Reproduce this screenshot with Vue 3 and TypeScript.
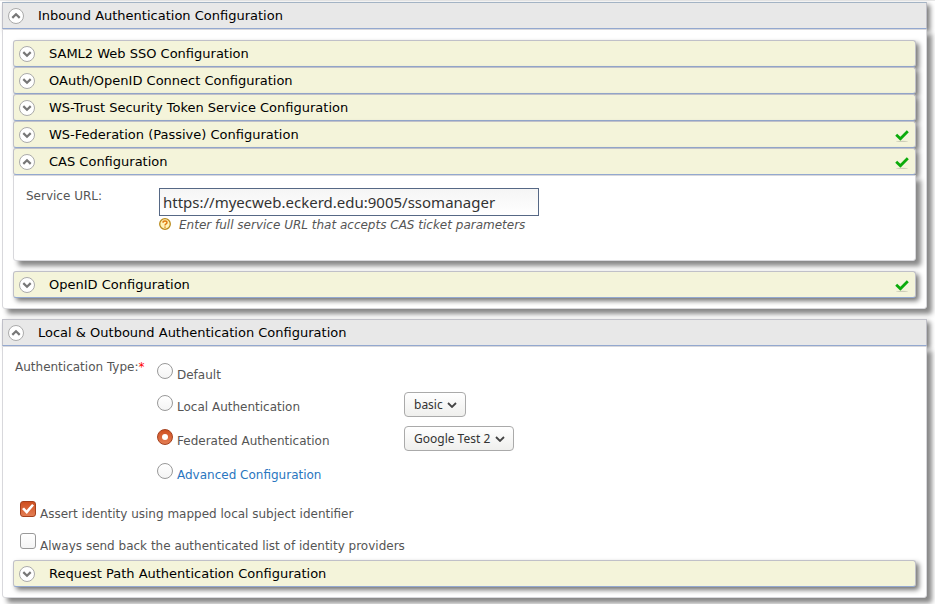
<script setup lang="ts">
import { ref } from 'vue'

interface Panel {
  title: string
  configured: boolean
}

const inboundPanels: Panel[] = [
  { title: 'SAML2 Web SSO Configuration', configured: false },
  { title: 'OAuth/OpenID Connect Configuration', configured: false },
  { title: 'WS-Trust Security Token Service Configuration', configured: false },
  { title: 'WS-Federation (Passive) Configuration', configured: true },
]

const inboundOpen = ref(true)
const outboundOpen = ref(true)
const casOpen = ref(true)
const serviceUrl = ref('https://myecweb.eckerd.edu:9005/ssomanager')
const authType = ref('federated')
const localAuthenticator = ref('basic')
const federatedIdp = ref('Google Test 2')
const assertIdentity = ref(true)
const sendIdpList = ref(false)
</script>

<template>
  <main class="page">
    <h2 class="bar outer">
      <button type="button" class="toggle" :aria-expanded="inboundOpen" @click="inboundOpen = !inboundOpen">
        <svg class="arrow" :class="{ down: !inboundOpen }" viewBox="0 0 16 16" aria-hidden="true">
          <circle cx="8" cy="8" r="7.5" />
          <path d="M4.3 9.9 8 6.3l3.7 3.6" />
        </svg>
        <span>Inbound Authentication Configuration</span>
      </button>
    </h2>
    <section v-if="inboundOpen" class="body outer-body">
      <h3 v-for="panel in inboundPanels" :key="panel.title" class="bar inner">
        <button type="button" class="toggle" aria-expanded="false">
          <svg class="arrow down" viewBox="0 0 16 16" aria-hidden="true">
            <circle cx="8" cy="8" r="7.5" />
            <path d="M4.3 9.9 8 6.3l3.7 3.6" />
          </svg>
          <span>{{ panel.title }}</span>
          <svg v-if="panel.configured" class="tick" viewBox="0 0 14 14" aria-hidden="true">
            <path d="M1.2 6.8 5.4 10.8 12.8 3.2" />
            <ellipse cx="7" cy="13.4" rx="6" ry="0.6" />
          </svg>
        </button>
      </h3>
      <h3 class="bar inner">
        <button type="button" class="toggle" :aria-expanded="casOpen" @click="casOpen = !casOpen">
          <svg class="arrow" :class="{ down: !casOpen }" viewBox="0 0 16 16" aria-hidden="true">
            <circle cx="8" cy="8" r="7.5" />
            <path d="M4.3 9.9 8 6.3l3.7 3.6" />
          </svg>
          <span>CAS Configuration</span>
          <svg class="tick" viewBox="0 0 14 14" aria-hidden="true">
            <path d="M1.2 6.8 5.4 10.8 12.8 3.2" />
            <ellipse cx="7" cy="13.4" rx="6" ry="0.6" />
          </svg>
        </button>
      </h3>
      <div v-if="casOpen" class="body cas">
        <label for="service-url" class="cas-label">Service URL:</label>
        <div class="cas-field">
          <input id="service-url" v-model="serviceUrl" class="url" type="text" aria-describedby="service-hint" />
          <div class="hint">
            <svg class="help" viewBox="0 0 12 12" aria-hidden="true">
              <circle cx="6" cy="6" r="5.3" />
              <path d="M4 4.7C4 2.5 8 2.5 8 4.7 8 6 6 5.9 6 7.4M6 8.5v1.2" />
            </svg>
            <span id="service-hint">Enter full service URL that accepts CAS ticket parameters</span>
          </div>
        </div>
      </div>
      <h3 class="bar inner">
        <button type="button" class="toggle" aria-expanded="false">
          <svg class="arrow down" viewBox="0 0 16 16" aria-hidden="true">
            <circle cx="8" cy="8" r="7.5" />
            <path d="M4.3 9.9 8 6.3l3.7 3.6" />
          </svg>
          <span>OpenID Configuration</span>
          <svg class="tick" viewBox="0 0 14 14" aria-hidden="true">
            <path d="M1.2 6.8 5.4 10.8 12.8 3.2" />
            <ellipse cx="7" cy="13.4" rx="6" ry="0.6" />
          </svg>
        </button>
      </h3>
    </section>

    <h2 class="bar outer">
      <button type="button" class="toggle" :aria-expanded="outboundOpen" @click="outboundOpen = !outboundOpen">
        <svg class="arrow" :class="{ down: !outboundOpen }" viewBox="0 0 16 16" aria-hidden="true">
          <circle cx="8" cy="8" r="7.5" />
          <path d="M4.3 9.9 8 6.3l3.7 3.6" />
        </svg>
        <span>Local &amp; Outbound Authentication Configuration</span>
      </button>
    </h2>
    <section v-if="outboundOpen" class="body outer-body outbound">
      <div class="auth" role="radiogroup" aria-labelledby="auth-type">
        <div id="auth-type" class="auth-label">Authentication Type:<span class="required">*</span></div>
        <div class="options">
          <div class="option first">
            <input id="type-default" v-model="authType" type="radio" name="auth" value="default" />
            <label for="type-default">Default</label>
          </div>
          <div class="option">
            <input id="type-local" v-model="authType" type="radio" name="auth" value="local" />
            <label for="type-local">Local Authentication</label>
            <span class="select">
              <select v-model="localAuthenticator" aria-label="Local authenticator">
                <option>basic</option>
              </select>
              <svg class="caret" viewBox="0 0 10 6" aria-hidden="true"><path d="M1 1l4 4 4-4" /></svg>
            </span>
          </div>
          <div class="option">
            <input id="type-federated" v-model="authType" type="radio" name="auth" value="federated" />
            <label for="type-federated">Federated Authentication</label>
            <span class="select">
              <select v-model="federatedIdp" aria-label="Federated identity provider">
                <option>Google Test 2</option>
              </select>
              <svg class="caret" viewBox="0 0 10 6" aria-hidden="true"><path d="M1 1l4 4 4-4" /></svg>
            </span>
          </div>
          <div class="option">
            <input id="type-advanced" v-model="authType" type="radio" name="auth" value="advanced" aria-labelledby="advanced-link" />
            <a id="advanced-link" href="#">Advanced Configuration</a>
          </div>
        </div>
      </div>
      <div class="checks">
        <div class="check">
          <input id="assert-identity" v-model="assertIdentity" type="checkbox" />
          <label for="assert-identity">Assert identity using mapped local subject identifier</label>
        </div>
        <div class="check">
          <input id="send-list" v-model="sendIdpList" type="checkbox" />
          <label for="send-list">Always send back the authenticated list of identity providers</label>
        </div>
      </div>
      <h3 class="bar inner">
        <button type="button" class="toggle" aria-expanded="false">
          <svg class="arrow down" viewBox="0 0 16 16" aria-hidden="true">
            <circle cx="8" cy="8" r="7.5" />
            <path d="M4.3 9.9 8 6.3l3.7 3.6" />
          </svg>
          <span>Request Path Authentication Configuration</span>
        </button>
      </h3>
    </section>
  </main>
</template>

<style>
body {
  background: #fff;
}
</style>

<style scoped>
* {
  box-sizing: border-box;
}

.page {
  padding: 1px 8px 6px 2px;
  border-top: 1px solid #e8e8e8;
  font: 12px/18px 'DejaVu Sans', sans-serif;
  color: #555;
}

.bar {
  height: 27px;
  margin: 0;
  border: 1px solid #c0c0c8;
  border-bottom-color: #94a9d0;
  box-shadow: 3px 3px 5px #777;
  font: 13px/18px 'DejaVu Sans', sans-serif;
  color: #000;
}

.bar.outer {
  background: #e8e8e8;
}

.bar.outer:first-child {
  border-top-color: #a3b3c4;
}

.bar.inner {
  background: #f4f4da;
  border-radius: 3px;
}

.toggle {
  display: flex;
  align-items: center;
  gap: 14px;
  width: 100%;
  height: 100%;
  padding: 0 6px 0 5px;
  border: 0;
  background: none;
  font: inherit;
  color: inherit;
  text-align: left;
}

.arrow {
  flex: none;
  width: 16px;
  height: 16px;
}

.arrow.down {
  transform: rotate(180deg);
}

.arrow circle {
  fill: #fff;
  stroke: #aaa;
}

.arrow path {
  fill: none;
  stroke: #777;
  stroke-width: 2.2;
}

.tick {
  width: 14px;
  height: 14px;
  margin-left: auto;
}

.tick path {
  fill: none;
  stroke: #0bab0b;
  stroke-width: 2.8;
}

.tick ellipse {
  fill: #ccccb8;
}

.body {
  border: 1px solid #d8d8dc;
  border-radius: 0 0 3px 3px;
  background: #fff;
  box-shadow: 5px 5px 5px #888;
}

.outer-body {
  margin-bottom: 10px;
  padding: 10px;
}

.outbound {
  padding-top: 9px;
}

.cas {
  display: flex;
  margin-bottom: 10px;
  padding: 12px 12px 26px;
}

.cas-label {
  flex: none;
  width: 133px;
  line-height: 16px;
}

.cas-field {
  flex: 1;
}

.url {
  display: block;
  width: 380px;
  max-width: 100%;
  height: 28px;
  padding: 0 3px;
  border: 1px solid #566885;
  background: linear-gradient(#f5f5f5, #fff);
  font: 15px 'Noto Sans', sans-serif;
  color: #333;
}

.hint {
  display: flex;
  gap: 8px;
  font-style: italic;
}

.help {
  flex: none;
  width: 12px;
  height: 12px;
  margin-top: 2px;
}

.help circle {
  fill: #fff3b8;
  stroke: #b98a1c;
  stroke-width: 1.3;
}

.help path {
  fill: none;
  stroke: #e07a10;
  stroke-width: 1.4;
}

.auth {
  display: flex;
  padding-left: 2px;
}

.auth-label {
  flex: none;
  width: 142px;
  padding-top: 2px;
}

.required {
  color: #f00;
}

.options {
  flex: 1;
}

.option,
.check {
  display: flex;
  align-items: flex-start;
  gap: 4px;
  height: 34px;
}

.option.first,
.check {
  height: 32px;
}

.option label,
.option a {
  padding-top: 10px;
}

.check label {
  padding-top: 11px;
}

.option label {
  width: 223px;
}

.option a {
  color: #2a76c0;
  text-decoration: none;
}

input[type='radio'],
input[type='checkbox'] {
  appearance: none;
  flex: none;
  display: grid;
  place-items: center;
  width: 16px;
  height: 16px;
  margin: 7px 0 0;
  border: 1px solid #999;
  background: linear-gradient(#fff, #f4f4f4);
}

input[type='radio'] {
  border-radius: 50%;
}

input[type='checkbox'] {
  border-radius: 3px;
}

input[type='radio']:checked,
input[type='checkbox']:checked {
  border-color: #a5401c;
  background: linear-gradient(#cf4f20, #e37d53);
}

input[type='radio']:checked::before {
  content: '';
  width: 6px;
  height: 6px;
  border-radius: 50%;
  background: #fff;
}

input[type='checkbox']:checked::before {
  content: '';
  width: 12px;
  height: 10px;
  background: #fff;
  clip-path: polygon(0 50%, 17% 34%, 38% 62%, 84% 0, 100% 14%, 40% 100%);
}

.select {
  display: flex;
  align-items: center;
  margin-top: 4px;
}

.select select {
  appearance: none;
  height: 25px;
  padding: 0 22px 0 9px;
  border: 1px solid #aaa;
  border-radius: 4px;
  background: linear-gradient(#fff, #efefed);
  font: 12px 'Noto Sans', sans-serif;
  color: #333;
}

.caret {
  width: 10px;
  height: 6px;
  margin-left: -19px;
  pointer-events: none;
}

.caret path {
  fill: none;
  stroke: #444;
  stroke-width: 1.8;
}

.checks {
  padding: 4px 0 2px 7px;
}
</style>
